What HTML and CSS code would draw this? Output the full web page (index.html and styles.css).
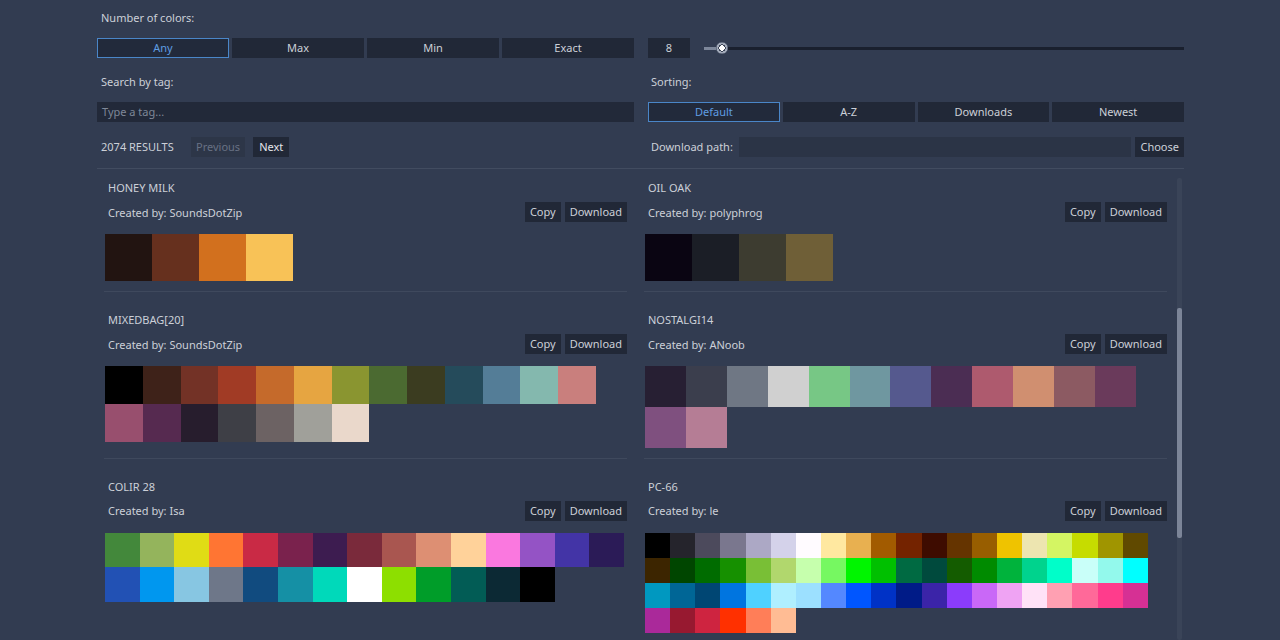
FILE: index.html
```html
<!DOCTYPE html>
<html>
<head>
<meta charset="utf-8">
<title>Palettes</title>
<link rel="stylesheet" href="styles.css">
</head>
<body>
<div class="app">
  <div class="controls">
    <div class="row r1">
      <div class="label">Number of colors:</div>
      <div></div>
    </div>
    <div class="row r2">
      <div class="seg">
        <button class="btn sel">Any</button>
        <button class="btn">Max</button>
        <button class="btn">Min</button>
        <button class="btn">Exact</button>
      </div>
      <div class="count">
        <div class="spin">8</div>
        <div class="slider">
          <div class="fill"></div>
          <div class="grab"></div>
          <div class="rest"></div>
        </div>
      </div>
    </div>
    <div class="row r3">
      <div class="label">Search by tag:</div>
      <div class="label label-r">Sorting:</div>
    </div>
    <div class="row r4">
      <div class="input placeholder">Type a tag...</div>
      <div class="seg">
        <button class="btn sel">Default</button>
        <button class="btn">A-Z</button>
        <button class="btn">Downloads</button>
        <button class="btn">Newest</button>
      </div>
    </div>
    <div class="row r5">
      <div class="pager">
        <div class="count-label">2074 RESULTS</div>
        <button class="btn small disabled">Previous</button>
        <button class="btn small next">Next</button>
      </div>
      <div class="path">
        <div class="path-label">Download path:</div>
        <div class="path-input"></div>
        <button class="btn small">Choose</button>
      </div>
    </div>
  </div>

  <div class="results">
    <div class="grid">
      <div class="card">
        <div class="title">HONEY MILK</div>
        <div class="meta"><span>Created by: SoundsDotZip</span><div class="actions"><button class="btn small">Copy</button><button class="btn small">Download</button></div></div>
        <div class="swatches s47 c4">
          <i style="background:#221411"></i><i style="background:#66301e"></i><i style="background:#d2701e"></i><i style="background:#f8c257"></i>
        </div>
      </div>
      <div class="card">
        <div class="title">OIL OAK</div>
        <div class="meta"><span>Created by: polyphrog</span><div class="actions"><button class="btn small">Copy</button><button class="btn small">Download</button></div></div>
        <div class="swatches s47 c4">
          <i style="background:#0a0512"></i><i style="background:#1b1e26"></i><i style="background:#3d3c30"></i><i style="background:#6f5f37"></i>
        </div>
      </div>

      <div class="card">
        <div class="title">MIXEDBAG[20]</div>
        <div class="meta"><span>Created by: SoundsDotZip</span><div class="actions"><button class="btn small">Copy</button><button class="btn small">Download</button></div></div>
        <div class="swatches s37 c13">
          <i style="background:#000000"></i><i style="background:#3e2219"></i><i style="background:#733226"></i><i style="background:#a13b25"></i><i style="background:#c56a2b"></i><i style="background:#e6a541"></i><i style="background:#8a9530"></i><i style="background:#4b6a31"></i><i style="background:#3b3c20"></i><i style="background:#254b5b"></i><i style="background:#547d97"></i><i style="background:#84b8ae"></i><i style="background:#c97f7d"></i>
          <i style="background:#984f6e"></i><i style="background:#562a50"></i><i style="background:#271d2d"></i><i style="background:#3e3f46"></i><i style="background:#6c6263"></i><i style="background:#a0a09a"></i><i style="background:#ead8cb"></i>
        </div>
      </div>
      <div class="card">
        <div class="title">NOSTALGI14</div>
        <div class="meta"><span>Created by: ANoob</span><div class="actions"><button class="btn small">Copy</button><button class="btn small">Download</button></div></div>
        <div class="swatches s40 c12">
          <i style="background:#271f33"></i><i style="background:#3b3e4d"></i><i style="background:#6f7784"></i><i style="background:#d0d0d0"></i><i style="background:#77c785"></i><i style="background:#6f97a0"></i><i style="background:#55598e"></i><i style="background:#4b2d53"></i><i style="background:#ae5a6e"></i><i style="background:#d08f70"></i><i style="background:#8c5a62"></i><i style="background:#6a3a5b"></i>
          <i style="background:#7f507f"></i><i style="background:#b57d95"></i>
        </div>
      </div>

      <div class="card">
        <div class="title">COLIR 28</div>
        <div class="meta"><span>Created by: Isa</span><div class="actions"><button class="btn small">Copy</button><button class="btn small">Download</button></div></div>
        <div class="swatches s34 c15">
          <i style="background:#43883b"></i><i style="background:#94b45c"></i><i style="background:#e0dc15"></i><i style="background:#ff7533"></i><i style="background:#c92a45"></i><i style="background:#7a224d"></i><i style="background:#3d1c50"></i><i style="background:#7a2a3b"></i><i style="background:#a95650"></i><i style="background:#dd8f73"></i><i style="background:#ffd29a"></i><i style="background:#fa78df"></i><i style="background:#9453c5"></i><i style="background:#4334a6"></i><i style="background:#2b1b57"></i>
          <i style="background:#2251b4"></i><i style="background:#0097ef"></i><i style="background:#87c6e2"></i><i style="background:#6e7789"></i><i style="background:#114b7f"></i><i style="background:#1590a5"></i><i style="background:#00d9ba"></i><i style="background:#ffffff"></i><i style="background:#8ddf00"></i><i style="background:#009d29"></i><i style="background:#025c55"></i><i style="background:#0c2934"></i><i style="background:#000000"></i>
        </div>
      </div>
      <div class="card">
        <div class="title">PC-66</div>
        <div class="meta"><span>Created by: le</span><div class="actions"><button class="btn small">Copy</button><button class="btn small">Download</button></div></div>
        <div class="swatches s25 c20">
          <i style="background:#000000"></i><i style="background:#25242c"></i><i style="background:#4c4a5c"></i><i style="background:#7a778e"></i><i style="background:#aca8c5"></i><i style="background:#d4d2ea"></i><i style="background:#fffbff"></i><i style="background:#ffe8a0"></i><i style="background:#e8b050"></i><i style="background:#a25b00"></i><i style="background:#742300"></i><i style="background:#3e0c00"></i><i style="background:#653400"></i><i style="background:#985e00"></i><i style="background:#efc300"></i><i style="background:#ede5b0"></i><i style="background:#d4f563"></i><i style="background:#c6dc00"></i><i style="background:#a09500"></i><i style="background:#604900"></i>
          <i style="background:#3c2500"></i><i style="background:#004600"></i><i style="background:#006c00"></i><i style="background:#169000"></i><i style="background:#79bf36"></i><i style="background:#b1d76d"></i><i style="background:#c6ffad"></i><i style="background:#76f861"></i><i style="background:#00f500"></i><i style="background:#00c000"></i><i style="background:#006a42"></i><i style="background:#004a3d"></i><i style="background:#145c00"></i><i style="background:#008b00"></i><i style="background:#00b33c"></i><i style="background:#00d38d"></i><i style="background:#00fec9"></i><i style="background:#c9fff9"></i><i style="background:#93f9ec"></i><i style="background:#00ffff"></i>
          <i style="background:#0098c0"></i><i style="background:#006696"></i><i style="background:#004673"></i><i style="background:#0075e0"></i><i style="background:#4fd1ff"></i><i style="background:#afefff"></i><i style="background:#9ce0ff"></i><i style="background:#5488ff"></i><i style="background:#0056ff"></i><i style="background:#0032c6"></i><i style="background:#001b87"></i><i style="background:#3b24a8"></i><i style="background:#8b3cfb"></i><i style="background:#c968f7"></i><i style="background:#efa3f3"></i><i style="background:#ffe2f7"></i><i style="background:#ffa0b2"></i><i style="background:#ff6999"></i><i style="background:#ff3c8c"></i><i style="background:#d63094"></i>
          <i style="background:#aa299a"></i><i style="background:#971930"></i><i style="background:#ce2440"></i><i style="background:#ff3000"></i><i style="background:#ff7e58"></i><i style="background:#ffbc94"></i>
        </div>
      </div>
    </div>
    <div class="scrollbar"><div class="thumb"></div></div>
  </div>
</div>
</body>
</html>
```

FILE: styles.css
```css
html, body {
  margin: 0;
  height: 640px;
  overflow: hidden;
}
body {
  background: #323c51;
  font-family: "Noto Sans", "DejaVu Sans", sans-serif;
  font-size: 11px;
  color: #ccd0d8;
}
.app {
  width: 1087px;
  margin-left: 97px;
  padding-top: 8px;
}
.row {
  display: grid;
  grid-template-columns: 537px 536px;
  column-gap: 14px;
  height: 20px;
  align-items: stretch;
}
.r1 { margin-bottom: 10px; }
.r2 { margin-bottom: 14px; }
.r3 { margin-bottom: 10px; }
.r4 { margin-bottom: 15px; }
.r5 { margin-bottom: 11px; }

.label {
  padding-left: 4px;
  line-height: 20px;
}
.label-r { padding-left: 3px; }

.btn {
  font: inherit;
  color: #ccd0d8;
  background: #212837;
  border: 1px solid transparent;
  height: 20px;
  padding: 0;
  margin: 0;
  line-height: 18px;
  white-space: nowrap;
}
.btn.sel {
  border-color: #4a86c8;
  color: #5f9de2;
  background: #222a3b;
}
.btn.small { padding: 0 4px; }
.btn.disabled {
  background: #2d3648;
  color: #687184;
}
.btn.next { padding: 0 5px; color: #e3e6eb; }

.seg {
  display: flex;
  gap: 3px;
}
.seg .btn { flex: 1; }

.count {
  display: flex;
  align-items: center;
}
.spin {
  width: 42px;
  height: 20px;
  line-height: 20px;
  text-align: center;
  background: #212837;
  margin-right: 14px;
}
.slider {
  flex: 1;
  display: flex;
  align-items: center;
  height: 20px;
}
.fill {
  width: 12px;
  height: 3px;
  background: #7d879a;
}
.grab {
  width: 12px;
  height: 12px;
  border-radius: 50%;
  background: radial-gradient(circle, #ffffff 0 2.6px, #3c4558 2.6px 3.6px, #a3abba 3.6px 5.2px, #6d7689 5.2px 6px);
}
.rest {
  flex: 1;
  height: 3px;
  background: #1a202e;
}

.input {
  background: #222939;
  height: 20px;
  line-height: 20px;
  padding-left: 5px;
}
.placeholder { color: #7f8898; }

.pager {
  display: flex;
  align-items: stretch;
}
.count-label {
  width: 90px;
  padding-left: 4px;
  line-height: 20px;
}
.pager .next { margin-left: 8px; }

.path {
  display: flex;
  align-items: stretch;
}
.path-label {
  width: 88px;
  padding-left: 3px;
  line-height: 20px;
}
.path-input {
  flex: 1;
  background: #2b3446;
  margin-right: 4px;
}

.results {
  border-top: 1px solid #424c60;
  height: 471px;
  display: flex;
  overflow: hidden;
}
.grid {
  display: grid;
  grid-template-columns: 523px 523px;
  column-gap: 17px;
  row-gap: 10px;
  padding-left: 7px;
  padding-top: 1px;
  align-content: start;
}
.card {
  padding: 8px 0 10px;
  border-bottom: 1px solid #3f495d;
}
.title {
  height: 20px;
  line-height: 20px;
  padding-left: 4px;
}
.meta {
  display: flex;
  justify-content: space-between;
  align-items: center;
  height: 20px;
  margin-top: 4px;
  padding-left: 4px;
}
.actions {
  display: flex;
  gap: 4px;
}
.swatches {
  margin-top: 12px;
  margin-left: 1px;
  display: grid;
  grid-template-columns: repeat(var(--n), var(--s));
  grid-auto-rows: var(--s);
}
.swatches i { display: block; }
.s47 { --s: 47px; }
.s37 { --s: 37.77px; }
.s40 { --s: 40.92px; }
.s34 { --s: 34.6px; }
.s25 { --s: 25.15px; }
.c4 { --n: 4; }
.c12 { --n: 12; }
.c13 { --n: 13; }
.c15 { --n: 15; }
.c20 { --n: 20; }

.scrollbar {
  width: 5px;
  margin-left: 10px;
  margin-top: 9px;
  background: #3a4458;
  border-radius: 2px;
}
.thumb {
  margin-top: 130px;
  height: 230px;
  background: #7c8598;
  border-radius: 2px;
}
```
